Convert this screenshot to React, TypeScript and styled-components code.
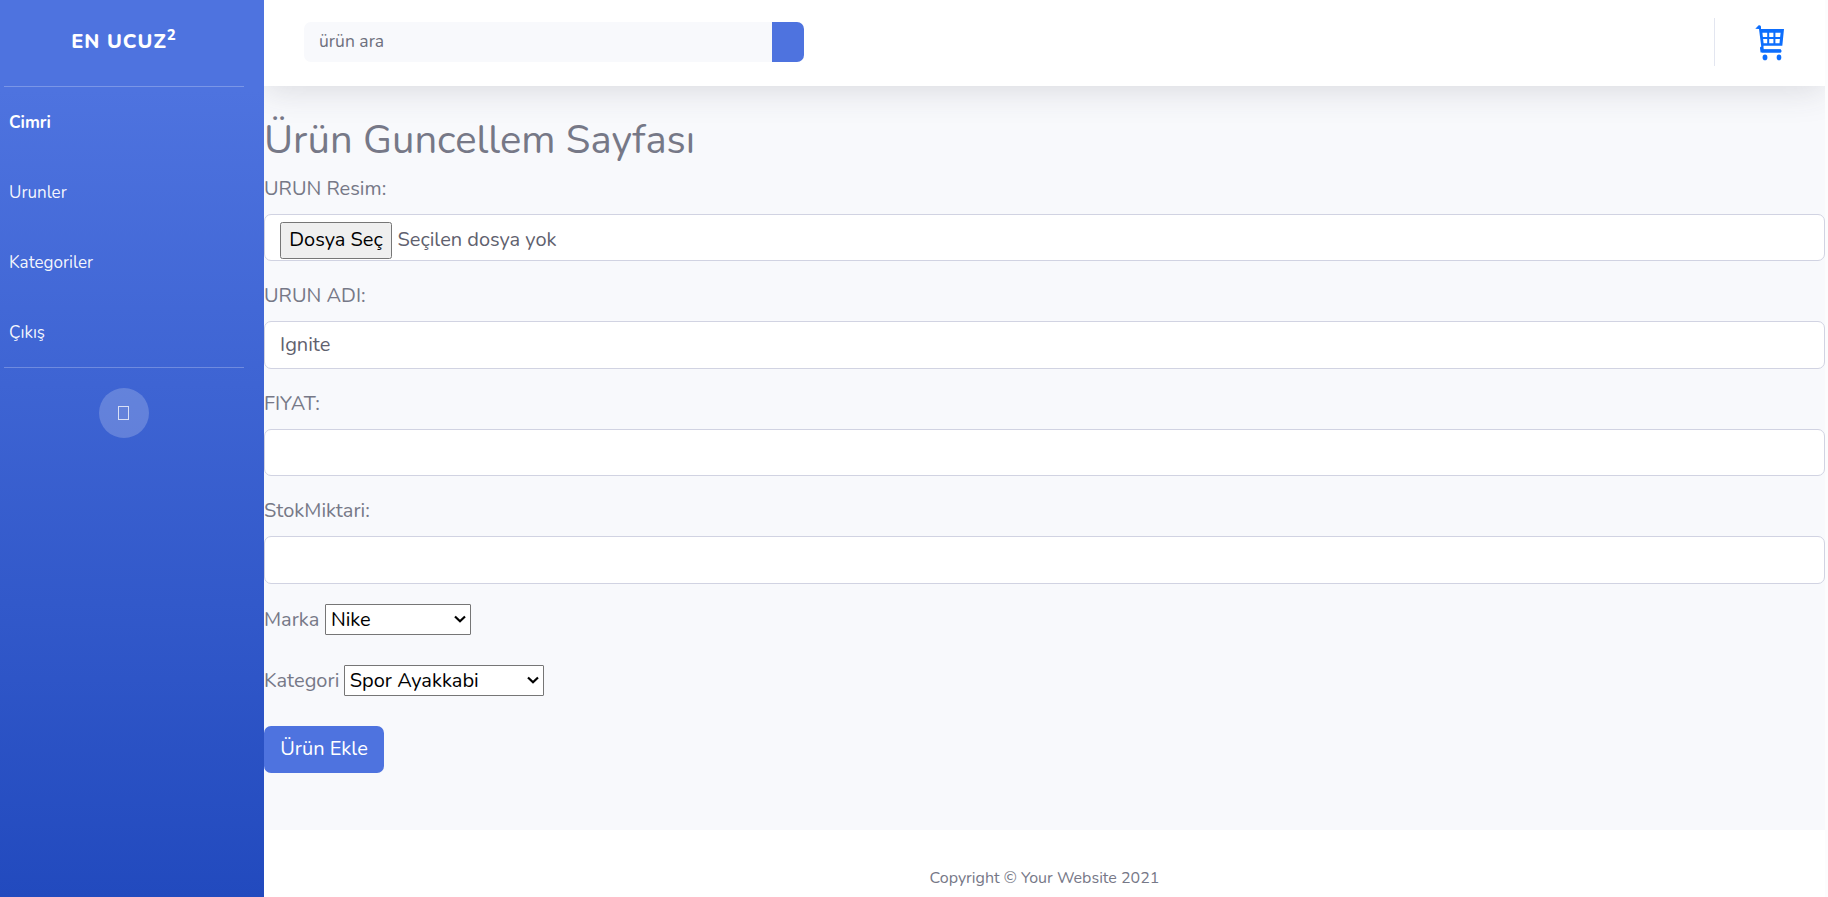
import React from "react";
import styled, { createGlobalStyle } from "styled-components";

const Global = createGlobalStyle`
  *, *::before, *::after { box-sizing: border-box; }
  html, body, #root { height: 100%; }
  body {
    margin: 0;
    overflow: hidden;
    background: #fcfcfd;
    color: #767887;
    font-family: Nunito, "Open Sans", sans-serif;
    font-size: 20px;
    line-height: 30px;
  }
`;

const Page = styled.div`
  display: flex;
  width: 1825px;
  height: 897px;
  background: #f8f9fc;
`;

const Sidebar = styled.nav`
  display: flex;
  flex-direction: column;
  flex: 0 0 264px;
  color: #fff;
  background: linear-gradient(180deg, #4e73df 10%, #224abe 100%);
`;

const Brand = styled.div`
  height: 86px;
  padding: 27px 16px 0 0;
  text-align: center;
  font-size: 20px;
  font-weight: 800;
  line-height: 30px;
  letter-spacing: 1px;

  sup {
    position: relative;
    top: -8.4px;
    font-size: 15px;
    line-height: 0;
    vertical-align: baseline;
  }
`;

const Rule = styled.hr`
  width: 240px;
  height: 1px;
  margin: 0 0 0 4px;
  border: 0;
  background: rgba(255, 255, 255, 0.25);
`;

const NavList = styled.ul`
  margin: 0;
  padding: 0;
  list-style: none;
`;

const NavItem = styled.li<{ $active?: boolean }>`
  height: 70px;
  padding: 23px 9px 0;
  font-size: 17px;
  line-height: 25px;
  font-weight: ${(p) => (p.$active ? 700 : 400)};
  color: ${(p) => (p.$active ? "#fff" : "rgba(255, 255, 255, 0.95)")};
`;

const Toggle = styled.button`
  display: flex;
  align-items: center;
  justify-content: center;
  width: 50px;
  height: 50px;
  margin: 20px 0 0 99px;
  padding: 0 2px 1px 0;
  border: 0;
  border-radius: 50%;
  background: rgba(255, 255, 255, 0.2);
`;

const MissingGlyph = styled.span`
  width: 11px;
  height: 14px;
  border: 1px solid rgba(255, 255, 255, 0.75);
`;

const Main = styled.div`
  display: flex;
  flex: 1;
  flex-direction: column;
  min-width: 0;
`;

const Topbar = styled.header`
  display: flex;
  flex: 0 0 86px;
  align-items: flex-start;
  padding: 0 40px;
  background: #fff;
  box-shadow: 0 3px 35px rgba(58, 59, 69, 0.17);
  clip-path: inset(0 0 -60px 0);
`;

const Search = styled.form`
  display: flex;
  width: 500px;
  height: 40px;
  margin-top: 22px;
`;

const SearchInput = styled.input`
  flex: 1;
  min-width: 0;
  padding: 0 15px 2px;
  border: 0;
  border-radius: 7px 0 0 7px;
  background: #f8f9fc;
  font: 400 17.5px Nunito, sans-serif;

  &::placeholder { color: #6e707e; opacity: 1; }
`;

const SearchButton = styled.button`
  width: 32px;
  padding: 0;
  border: 0;
  border-radius: 0 7px 7px 0;
  background: #4e73df;
`;

const Divider = styled.div`
  width: 1px;
  height: 48px;
  margin: 18px 40px 0 auto;
  background: #e3e6f0;
`;

const CartIcon = styled.svg`
  width: 30px;
  height: 36px;
  margin-top: 25px;
`;

const Content = styled.main`
  flex: 0 0 744px;
`;

const Title = styled.h1`
  margin: 0;
  padding-top: 30px;
  height: 87px;
  font-size: 40px;
  font-weight: 400;
  line-height: 48px;
`;

const Field = styled.div`
  height: 107.4px;
`;

const Label = styled.label`
  display: block;
  height: 40.9px;
  padding-top: 0.9px;
  line-height: 30px;
`;

const controlBox = `
  width: 100%;
  height: 47.5px;
  border: 1px solid #d1d3e2;
  border-radius: 7px;
  background: #fff;
  color: #5f616e;
`;

const TextInput = styled.input`
  ${controlBox}
  display: block;
  padding: 0 15px 1px;
  font: 400 20px Nunito, sans-serif;
`;

const FileBox = styled.div`
  ${controlBox}
  display: flex;
  align-items: flex-start;
  height: 47px;
  padding: 7px 15px 0;
`;

const FileButton = styled.button`
  width: 112px;
  height: 37px;
  padding: 0 0 2px;
  border: 1px solid #767676;
  border-radius: 2.5px;
  background: #efefef;
  color: #000;
  font: 400 20px/33px Nunito, sans-serif;
`;

const FileName = styled.span`
  margin-left: 5.5px;
  line-height: 35px;
`;

const Selects = styled.div`
  margin-top: -13.6px;
`;

const SelectRow = styled.div<{ $gap: number }>`
  display: flex;
  align-items: center;
  gap: ${(p) => p.$gap}px;
  height: 61px;

  label { padding-top: 1.5px; }
`;

const SelectBox = styled.span`
  display: grid;
  align-items: center;

  > * { grid-area: 1 / 1; }
`;

const Select = styled.select<{ $width: number }>`
  appearance: none;
  width: ${(p) => p.$width}px;
  height: 31px;
  padding: 0 4.5px;
  border: 1px solid #767676;
  border-radius: 1px;
  background: #fff;
  color: #000;
  font: 400 20px/27px Nunito, sans-serif;
`;

const Chevron = styled.svg`
  justify-self: end;
  width: 12px;
  height: 8px;
  margin-right: 5px;
  pointer-events: none;
`;

const Submit = styled.button`
  display: block;
  width: 120px;
  height: 47px;
  margin-top: 15px;
  padding: 0 0 2px;
  border: 0;
  border-radius: 7px;
  background: #4e73df;
  color: #fff;
  font: 400 20px Nunito, sans-serif;
`;

const Footer = styled.footer`
  flex: 1;
  padding-top: 36px;
  background: #fff;
  text-align: center;
  font-size: 16px;
  line-height: 24px;
`;

function Dropdown({ id, width, option }: { id: string; width: number; option: string }) {
  return (
    <SelectBox>
      <Select id={id} $width={width}><option>{option}</option></Select>
      <Chevron viewBox="0 0 12 8" fill="none" stroke="#000" strokeWidth="2.2">
        <path d="M1 1.5L6 6.3L11 1.5" />
      </Chevron>
    </SelectBox>
  );
}

export default function App() {
  return (
    <>
      <Global />
      <Page>
        <Sidebar>
          <Brand>EN UCUZ<sup>2</sup></Brand>
          <Rule />
          <NavList>
            <NavItem $active>Cimri</NavItem>
            <NavItem>Urunler</NavItem>
            <NavItem>Kategoriler</NavItem>
            <NavItem>Çıkış</NavItem>
          </NavList>
          <Rule />
          <Toggle aria-label="Menü"><MissingGlyph /></Toggle>
        </Sidebar>
        <Main>
          <Topbar>
            <Search>
              <SearchInput placeholder="ürün ara" />
              <SearchButton type="button" aria-label="Ara" />
            </Search>
            <Divider />
            <CartIcon viewBox="0 0 30 36" fill="none">
              <path d="M0.3 3.7L3.7 .3Q5.9 -.2 6 1.7V4H29L27.3 20.8H8.5V24.3H25.8V27.5H7L4 4Z" fill="#0d6efd" />
              <path d="M7.4 7.8H12.2V12H7.9ZM14.2 7.8H18.4V12H14.2ZM20.4 7.8H25.6L25.1 12H20.4ZM8.1 14.1H12.2V18.2H8.6ZM14.2 14.1H18.4V18.2H14.2ZM20.4 14.1H24.9L24.5 18.2H20.4Z" fill="#fff" />
              <path d="M6.6 23L7 26H25" stroke="#0d6efd" strokeWidth="3.2" strokeLinecap="round" />
              <ellipse cx="10" cy="32.4" rx="2.4" ry="2.8" fill="#0d6efd" />
              <ellipse cx="24" cy="32.4" rx="2.3" ry="2.8" fill="#0d6efd" />
            </CartIcon>
          </Topbar>
          <Content>
            <Title>Ürün Guncellem Sayfası</Title>
            <Field>
              <Label>URUN Resim:</Label>
              <FileBox>
                <FileButton type="button">Dosya Seç</FileButton>
                <FileName>Seçilen dosya yok</FileName>
              </FileBox>
            </Field>
            <Field>
              <Label htmlFor="ad">URUN ADI:</Label>
              <TextInput id="ad" defaultValue="Ignite" />
            </Field>
            <Field>
              <Label htmlFor="fiyat">FIYAT:</Label>
              <TextInput id="fiyat" />
            </Field>
            <Field>
              <Label htmlFor="stok">StokMiktari:</Label>
              <TextInput id="stok" />
            </Field>
            <Selects>
              <SelectRow $gap={6}>
                <label htmlFor="marka">Marka</label>
                <Dropdown id="marka" width={146} option="Nike" />
              </SelectRow>
              <SelectRow $gap={5}>
                <label htmlFor="kategori">Kategori</label>
                <Dropdown id="kategori" width={200} option="Spor Ayakkabi" />
              </SelectRow>
            </Selects>
            <Submit type="button">Ürün Ekle</Submit>
          </Content>
          <Footer>Copyright © Your Website 2021</Footer>
        </Main>
      </Page>
    </>
  );
}
